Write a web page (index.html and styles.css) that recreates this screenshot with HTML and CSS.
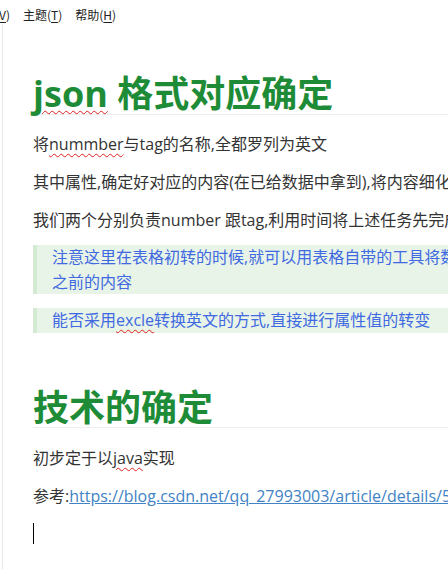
FILE: index.html
```html
<!DOCTYPE html>
<html lang="zh-CN">
<head>
<meta charset="utf-8">
<title>json 格式对应确定</title>
<link rel="stylesheet" href="styles.css">
</head>
<body>
<div class="menubar">
  <span class="menu menu-cut"><u>V</u>)</span>
  <span class="menu">主题(<u>T</u>)</span>
  <span class="menu">帮助(<u>H</u>)</span>
</div>
<div class="editor">
  <div class="doc">
    <h1 class="h"><span class="spell">json</span> 格式对应确定</h1>
    <p class="p">将<span class="spell">nummber</span>与tag的名称,全都罗列为英文</p>
    <p class="p">其中属性,确定好对应的内容(在已给数据中拿到),将内容细化到每一个字段</p>
    <p class="p">我们两个分别负责number 跟tag,利用时间将上述任务先完成</p>
    <blockquote class="quote">注意这里在表格初转的时候,就可以用表格自带的工具将数据进行整理,保留<br>之前的内容</blockquote>
    <blockquote class="quote">能否采用<span class="spell">excle</span>转换英文的方式,直接进行属性值的转变</blockquote>
    <h2 class="h h2">技术的确定</h2>
    <p class="p">初步定于以<span class="spell">java</span>实现</p>
    <p class="p">参考:<a class="link" href="#">https://blog.csdn.net/qq_27993003/article/details/54581532</a></p>
    <p class="p caret-line"><span class="caret"></span></p>
  </div>
</div>
</body>
</html>
```
FILE: styles.css
```css
html, body {
  margin: 0;
  padding: 0;
  background: #ffffff;
  overflow: hidden;
}
body {
  width: 448px;
  height: 569px;
  font-family: "Open Sans", "Noto Sans CJK SC", sans-serif;
  color: #333333;
}
.menubar {
  height: 24px;
  display: flex;
  align-items: center;
  gap: 13px;
  font-family: "Noto Sans CJK SC", "Open Sans", sans-serif;
  font-size: 12px;
  color: #222222;
  white-space: nowrap;
  padding-top: 5px;
  box-sizing: border-box;
}
.menu u {
  text-decoration: underline;
  text-underline-offset: 2px;
}
.menu-cut {
  margin-left: -1px;
}
.editor {
  margin-left: 2px;
  border-left: 1px solid #e6e6e6;
  height: 545px;
  overflow: hidden;
}
.doc {
  padding-left: 30px;
  width: 900px;
  white-space: nowrap;
  padding-top: 50px;
}
.h {
  margin: 0;
  font-size: 36px;
  font-weight: 700;
  color: #1e8c37;
  line-height: 40px;
  border-bottom: 1px solid #eeeeee;
  padding-bottom: 0;
}
.h2 {
  margin-top: 56px;
  line-height: 38px;
}
.p {
  margin: 14px 0 0 0;
  font-size: 16px;
  line-height: 24px;
}
.h + .p {
  margin-top: 17px;
}
.h2 + .p {
  margin-top: 18px;
}
.quote {
  margin: 13px 0 0 0;
  padding: 0 0 0 15px;
  background: #e7f4e7;
  border-left: 4px solid #d3ebd3;
  color: #4169e1;
  font-size: 16px;
  line-height: 24.5px;
}
.quote + .quote {
  margin-top: 14px;
}
.spell {
  text-decoration: underline wavy #e02020;
  text-decoration-thickness: 1px;
  text-underline-offset: 3px;
}
.link {
  color: #4183c4;
  text-decoration: underline;
}
.caret-line {
  height: 24px;
  margin-top: 12px;
}
.caret {
  display: inline-block;
  width: 1px;
  height: 21px;
  background: #000000;
  vertical-align: middle;
}
```
